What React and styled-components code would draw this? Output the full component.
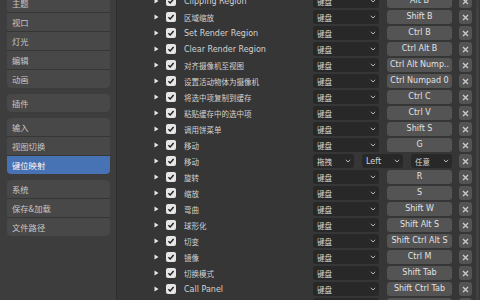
import React from "react";
import styled, { createGlobalStyle } from "styled-components";

const GlobalStyle = createGlobalStyle`
  html, body {
    margin: 0;
    padding: 0;
    background: #363636;
    overflow: hidden;
  }
  body {
    font-family: "DejaVu Sans", "Noto Sans CJK SC", sans-serif;
  }
`;

const navGroups = [
    ["主题", "视口", "灯光", "编辑", "动画"],
    ["插件"],
    ["输入", "视图切换", "键位映射"],
    ["系统", "保存&加载", "文件路径"],
];

const items = [
    { name: "Clipping Region", key: "Alt B" },
    { name: "区域缩放", key: "Shift B" },
    { name: "Set Render Region", key: "Ctrl B" },
    { name: "Clear Render Region", key: "Ctrl Alt B" },
    { name: "对齐摄像机至视图", key: "Ctrl Alt Nump.." },
    { name: "设置活动物体为摄像机", key: "Ctrl Numpad 0" },
    { name: "将选中项复制到缓存", key: "Ctrl C" },
    { name: "粘贴缓存中的选中项", key: "Ctrl V" },
    { name: "调用饼菜单", key: "Shift S" },
    { name: "移动", key: "G" },
    { name: "移动", drag: ["拖拽", "Left", "任意"] },
    { name: "旋转", key: "R" },
    { name: "缩放", key: "S" },
    { name: "弯曲", key: "Shift W" },
    { name: "球形化", key: "Shift Alt S" },
    { name: "切变", key: "Shift Ctrl Alt S" },
    { name: "镜像", key: "Ctrl M" },
    { name: "切换模式", key: "Shift Tab" },
    { name: "Call Panel", key: "Shift Ctrl Tab" },
    { name: "Call Panel", key: "Ctrl Tab" },
];

const isCJK = (s) => /[\u4e00-\u9fff]/.test(s);

const Chevron = () => (
    <svg width="6" height="4" viewBox="0 0 6 4">
        <path d="M0.8 0.8 L3 3 L5.2 0.8" fill="none" stroke="#b8b8b8" strokeWidth="1" />
    </svg>
);

const App = () => {
    return (
        <Screen>
            <GlobalStyle />
            <Sidebar>
                {navGroups.map((group, gi) => (
                    <NavGroup key={gi}>
                        {group.map((label) => (
                            <NavItem key={label} active={label === "键位映射"}>{label}</NavItem>
                        ))}
                    </NavGroup>
                ))}
            </Sidebar>
            <Main>
                <List>
                    {items.map((it, i) => (
                        <Row key={i}>
                            <Arrow>
                                <svg width="5" height="6" viewBox="0 0 5 6">
                                    <path d="M0.5 0.5 L4.5 3 L0.5 5.5 Z" fill="#e8e8e8" />
                                </svg>
                            </Arrow>
                            <Check>
                                <svg width="8" height="8" viewBox="0 0 8 8">
                                    <path d="M1.4 4.2 L3.2 6 L6.6 2" fill="none" stroke="#1e1e1e" strokeWidth="1.4" />
                                </svg>
                            </Check>
                            <Label cjk={isCJK(it.name)}>{it.name}</Label>
                            {it.drag ? (
                                <Controls>
                                    {it.drag.map((d) => (
                                        <Select key={d} grow>
                                            <SelectText cjk={isCJK(d)}>{d}</SelectText>
                                            <Chevron />
                                        </Select>
                                    ))}
                                </Controls>
                            ) : (
                                <Controls>
                                    <Select width={66}>
                                        <SelectText cjk>键盘</SelectText>
                                        <Chevron />
                                    </Select>
                                    <KeyButton>{it.key}</KeyButton>
                                </Controls>
                            )}
                            <Remove>
                                <svg width="7" height="7" viewBox="0 0 7 7">
                                    <path d="M1 1 L6 6 M6 1 L1 6" stroke="#cfcfcf" strokeWidth="1.2" />
                                </svg>
                            </Remove>
                        </Row>
                    ))}
                </List>
                <ScrollBar />
            </Main>
        </Screen>
    );
};

const Screen = styled.div`
  display: flex;
  width: 480px;
  height: 300px;
  overflow: hidden;
  background: #363636;
`;

const Sidebar = styled.div`
  width: 117px;
  flex-shrink: 0;
  background: #3d3d3d;
  border-right: 1px solid #2e2e2e;
  box-sizing: border-box;
  padding: 0 6px 0 7px;
  display: flex;
  flex-direction: column;
  gap: 6px;
  margin-top: -6px;
  height: 306px;
`;

const NavGroup = styled.div`
  display: flex;
  flex-direction: column;
  gap: 1px;
  background: #363636;
  border-radius: 4px;
  overflow: hidden;
`;

const NavItem = styled.div`
  height: 18px;
  line-height: 18px;
  padding-left: 5px;
  font-size: 8.3px;
  color: ${(p) => (p.active ? "#ffffff" : "#c6c6c6")};
  background: ${(p) => (p.active ? "#4772b3" : "#484848")};
  font-family: "Noto Sans CJK SC", "DejaVu Sans", sans-serif;
`;

const Main = styled.div`
  position: relative;
  flex: 1;
  overflow: hidden;
`;

const List = styled.div`
  display: flex;
  flex-direction: column;
  gap: 2px;
  margin-top: -6px;
  padding: 0 7px 0 37px;
`;

const Row = styled.div`
  display: flex;
  align-items: center;
  height: 14px;
`;

const Arrow = styled.div`
  width: 12px;
  flex-shrink: 0;
  display: flex;
  align-items: center;
`;

const Check = styled.div`
  width: 10px;
  height: 10px;
  flex-shrink: 0;
  border-radius: 2px;
  background: #e6e6e6;
  display: flex;
  align-items: center;
  justify-content: center;
`;

const Label = styled.div`
  width: 129px;
  flex-shrink: 0;
  margin-left: 8px;
  font-size: ${(p) => (p.cjk ? "7.5px" : "8px")};
  color: #d2d2d2;
  white-space: nowrap;
  overflow: hidden;
`;

const Controls = styled.div`
  width: 139px;
  flex-shrink: 0;
  display: flex;
  gap: 8px;
  height: 14px;
`;

const Select = styled.div`
  ${(p) => (p.grow ? "flex: 1;" : `width: ${p.width}px; flex-shrink: 0;`)}
  height: 14px;
  box-sizing: border-box;
  background: #282828;
  border-radius: 3px;
  display: flex;
  align-items: center;
  justify-content: space-between;
  padding: 0 3px 0 4px;
`;

const SelectText = styled.span`
  font-size: ${(p) => (p.cjk ? "7.5px" : "8px")};
  color: #d6d6d6;
`;

const KeyButton = styled.div`
  flex: 1;
  height: 14px;
  background: #545454;
  border-radius: 3px;
  font-size: 8px;
  line-height: 14px;
  text-align: center;
  color: #e2e2e2;
  white-space: nowrap;
  overflow: hidden;
`;

const Remove = styled.div`
  width: 13px;
  height: 14px;
  margin-left: 7px;
  flex-shrink: 0;
  background: #545454;
  border-radius: 3px;
  display: flex;
  align-items: center;
  justify-content: center;
`;

const ScrollBar = styled.div`
  position: absolute;
  right: 1px;
  top: 0;
  width: 3px;
  height: 300px;
  background: #404040;
  border-radius: 2px;
`;

export default App;
